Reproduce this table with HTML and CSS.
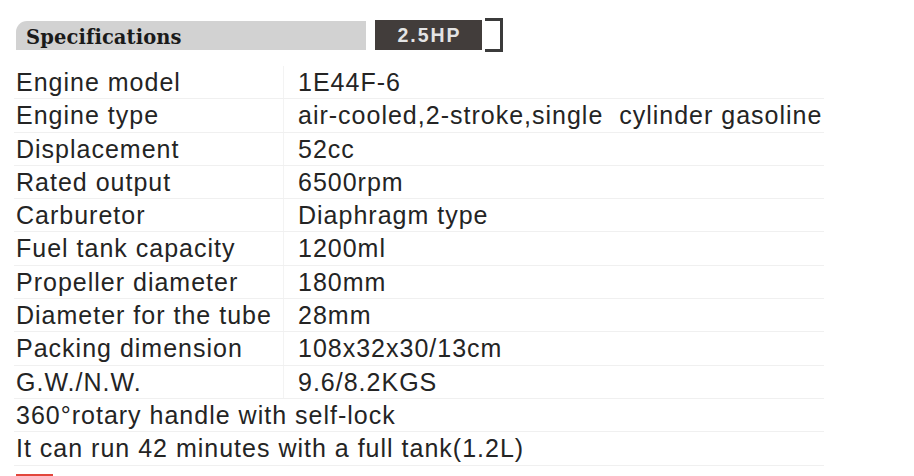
FILE: index.html
```html
<!DOCTYPE html>
<html lang="en">
<head>
<meta charset="utf-8">
<title>Specifications</title>
<link rel="stylesheet" href="styles.css">
</head>
<body>
<div class="page">
  <div class="head">
    <div class="head-bar">Specifications</div>
    <div class="head-hp">2.5HP</div>
    <div class="head-bracket"></div>
  </div>
  <div class="spec">
    <div class="row"><div class="k">Engine model</div><div class="v">1E44F-6</div></div>
    <div class="row"><div class="k">Engine type</div><div class="v">air-cooled,2-stroke,single  cylinder gasoline</div></div>
    <div class="row"><div class="k">Displacement</div><div class="v">52cc</div></div>
    <div class="row"><div class="k">Rated output</div><div class="v">6500rpm</div></div>
    <div class="row"><div class="k">Carburetor</div><div class="v">Diaphragm type</div></div>
    <div class="row"><div class="k">Fuel tank capacity</div><div class="v">1200ml</div></div>
    <div class="row"><div class="k">Propeller diameter</div><div class="v">180mm</div></div>
    <div class="row"><div class="k">Diameter for the tube</div><div class="v">28mm</div></div>
    <div class="row"><div class="k">Packing dimension</div><div class="v">108x32x30/13cm</div></div>
    <div class="row"><div class="k">G.W./N.W.</div><div class="v">9.6/8.2KGS</div></div>
    <div class="row full"><div class="k">360°rotary handle with self-lock</div></div>
    <div class="row full"><div class="k">It can run 42 minutes with a full tank(1.2L)</div></div>
  </div>
  <div class="red-tab"></div>
</div>
</body>
</html>
```
FILE: styles.css
```css
html, body {
  margin: 0;
  padding: 0;
  background: #ffffff;
}
.page {
  width: 914px;
  height: 476px;
  overflow: hidden;
  padding: 18px 0 0 16px;
  box-sizing: border-box;
}
.head {
  display: flex;
  align-items: center;
  height: 34px;
}
.head-bar {
  width: 350px;
  height: 29px;
  box-sizing: border-box;
  background: #d2d2d2;
  border-top-left-radius: 11px;
  padding: 4px 0 0 10px;
  line-height: 26px;
  font-family: "DejaVu Serif", "Liberation Serif", serif;
  font-weight: bold;
  font-size: 19.5px;
  letter-spacing: 0.1px;
  color: #1a1a1a;
}
.head-hp {
  margin-left: 9px;
  width: 107px;
  height: 30px;
  background: #423d3b;
  color: #e4e4e4;
  font-family: "Liberation Sans", Arial, sans-serif;
  font-weight: bold;
  font-size: 19.5px;
  letter-spacing: 2px;
  line-height: 31px;
  text-align: center;
  text-indent: 2px;
}
.head-bracket {
  margin-left: 3px;
  width: 15px;
  height: 28px;
  border: 3px solid #3b3b3b;
  border-left: none;
}
.spec {
  margin: 14px 0 0 -2px;
  width: 810px;
  font-family: "Liberation Sans", Arial, sans-serif;
  font-size: 25px;
  letter-spacing: 1px;
  color: #242424;
}
.row {
  display: flex;
  height: 33.3px;
  box-sizing: border-box;
  border-bottom: 1px solid #f0f0f0;
  line-height: 32.3px;
}
.k {
  width: 267px;
  padding-left: 2px;
  border-right: 1px solid #f3f3f3;
  white-space: pre;
}
.v {
  padding-left: 14px;
  white-space: pre;
}
.row.full .k {
  width: auto;
  border-right: none;
}
.red-tab {
  margin-top: 8px;
  width: 33px;
  height: 12px;
  border: 2px solid #e2463c;
  border-bottom: none;
}
```
